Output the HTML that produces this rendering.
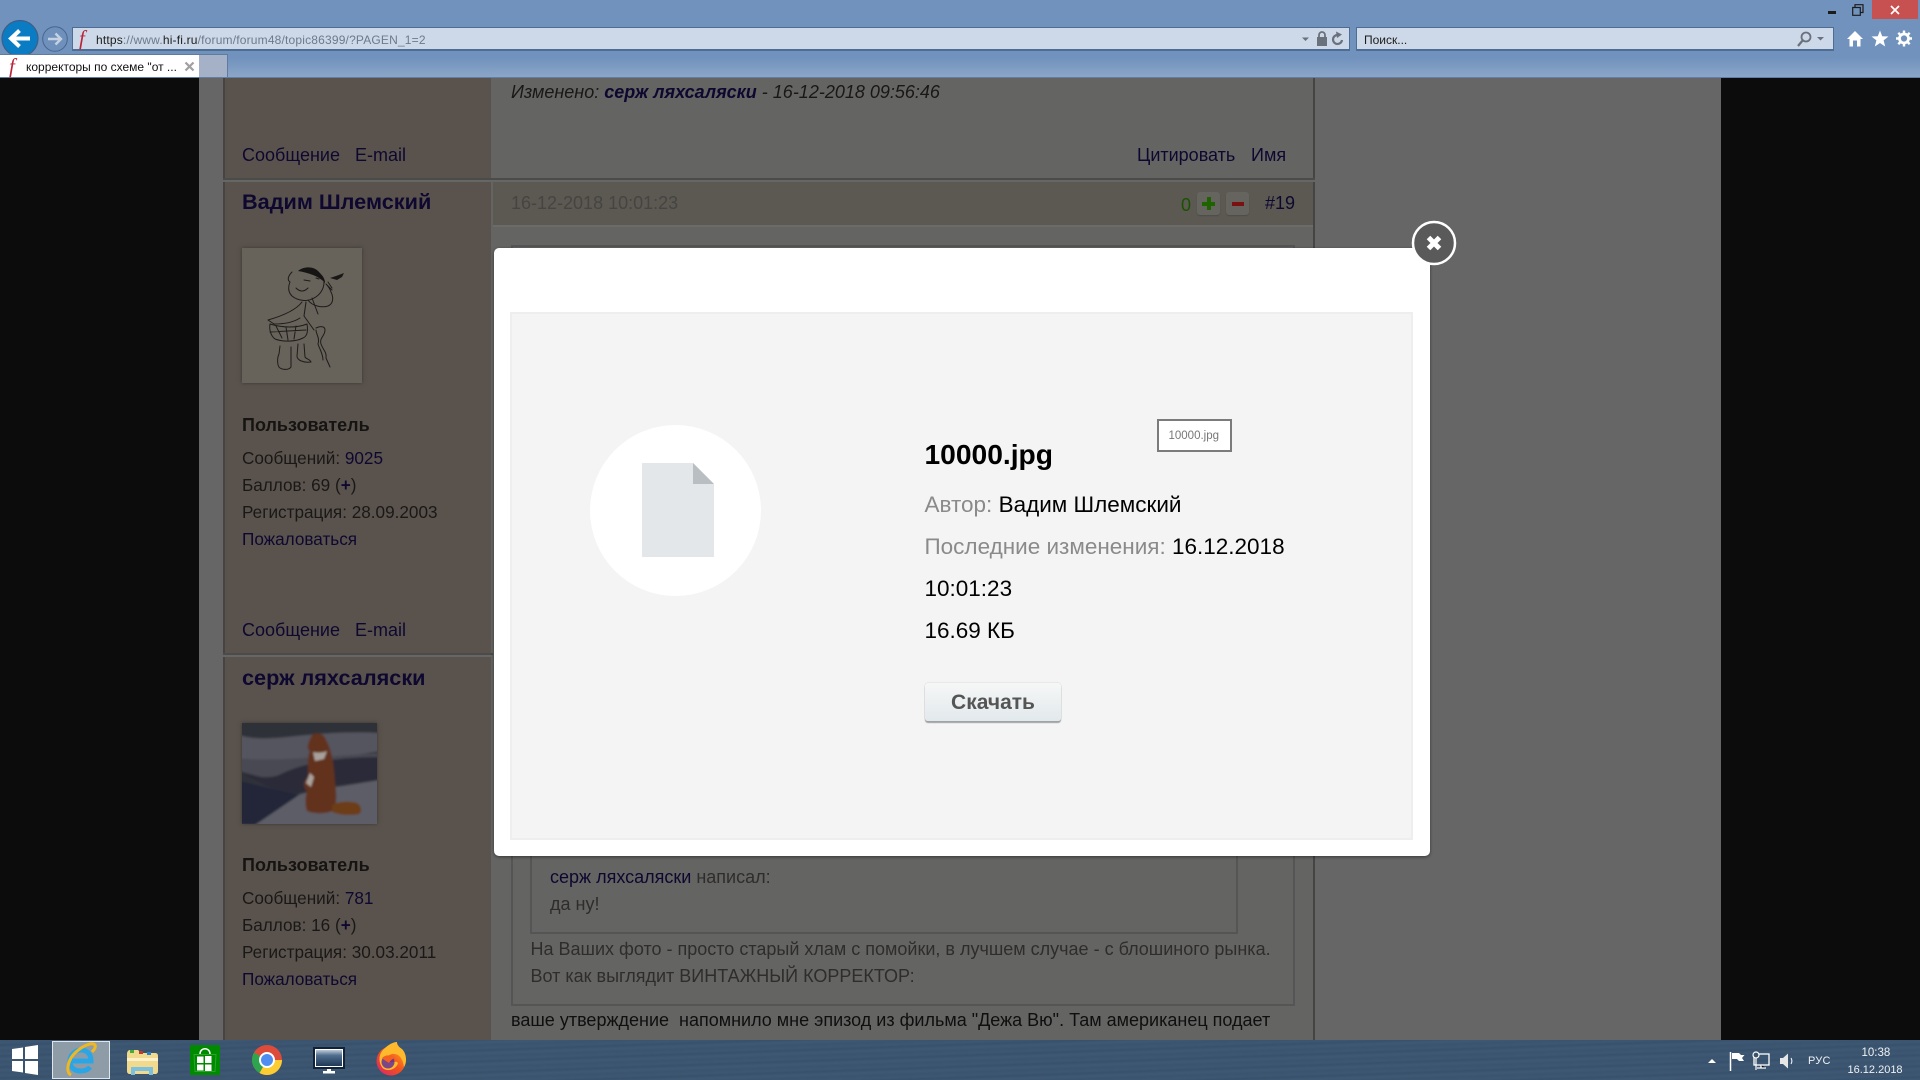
<!DOCTYPE html>
<html lang="ru"><head><meta charset="utf-8"><title>корректоры по схеме</title>
<style>
html,body{margin:0;padding:0;width:1920px;height:1080px;overflow:hidden;background:#0c0c0c}
body{position:relative;font-family:"Liberation Sans","DejaVu Sans",sans-serif}
.a{position:absolute;display:block}
.t{position:absolute;white-space:nowrap;line-height:1;}
.f{font-size:18px;color:#1a1816}
.s{font-size:17.15px;color:#1a1816}
.l{color:#0e0830}
.n{font-size:18px;color:#0e0830}
</style></head><body>
<!-- page background -->
<div class="a" style="left:199px;top:77px;width:1522px;height:963px;background:#666"></div>
<div class="a" style="left:223px;top:77px;width:2px;height:963px;background:#464442"></div>
<div class="a" style="left:225px;top:77px;width:266px;height:963px;background:#5a534d"></div>
<div class="a" style="left:491px;top:77px;width:822px;height:963px;background:#646462"></div>
<div class="a" style="left:1313px;top:77px;width:2px;height:963px;background:#454545"></div>
<div class="a" style="left:223px;top:178px;width:1092px;height:2px;background:#4b4b49"></div>
<div class="a" style="left:223px;top:180px;width:1092px;height:2px;background:#666"></div>
<div class="a" style="left:223px;top:653px;width:270px;height:2px;background:#4b4b49"></div>
<div class="a" style="left:223px;top:655px;width:270px;height:2px;background:#666"></div>
<div class="a" style="left:493px;top:182px;width:820px;height:43px;background:#5c5953"></div>
<div class="a" style="left:493px;top:225px;width:820px;height:2px;background:#6b6b69"></div>
<div class="a" style="left:511px;top:245px;width:784px;height:761px;box-sizing:border-box;border:2px solid #555"></div>
<div class="a" style="left:530px;top:700px;width:708px;height:234px;box-sizing:border-box;border:2px solid #555"></div>

<!-- forum text -->
<div class="t f" style="left:511px;top:83px;font-style:italic;">Изменено: <b class="l">серж ляхсаляски</b> - 16-12-2018 09:56:46</div>
<div class="t n" style="left:242px;top:146px">Сообщение</div>
<div class="t n" style="left:355px;top:146px">E-mail</div>
<div class="t n" style="left:1137px;top:146px">Цитировать</div>
<div class="t n" style="left:1251px;top:146px">Имя</div>

<div class="t l" style="left:242px;top:191px;font-size:21.7px;font-weight:bold">Вадим Шлемский</div>
<div class="t" style="left:511px;top:194px;font-size:18px;color:#464442">16-12-2018 10:01:23</div>
<div class="t" style="left:1181px;top:196px;font-size:18px;color:#1a5200">0</div>
<div class="a" style="left:1197px;top:192px;width:23px;height:23px;background:#65645f;border-radius:3px;box-shadow:0 1px 1px #4c4c48"></div>
<div class="a" style="left:1202px;top:201.5px;width:13px;height:4px;background:#1f6200"></div>
<div class="a" style="left:1206.5px;top:197px;width:4px;height:13px;background:#1f6200"></div>
<div class="a" style="left:1226px;top:192px;width:23px;height:23px;background:#65645f;border-radius:3px;box-shadow:0 1px 1px #4c4c48"></div>
<div class="a" style="left:1232px;top:201.5px;width:12px;height:4px;background:#7a1010"></div>
<div class="t n" style="left:1265px;top:194px">#19</div>

<!-- avatar 1 -->
<svg class="a" style="left:242px;top:248px;box-shadow:0 0 4px #3a3632" width="120" height="135" viewBox="0 0 120 135">
<rect width="120" height="135" fill="#67625a"/>
<g fill="none" stroke="#1e1c1a" stroke-width="1" stroke-linecap="round" stroke-linejoin="round">
<path d="M50 24c-4 4-5 8-2 10-2 5-2 10 2 14 6 5 16 6 22 2 6-3 10-9 10-16"/>
<path d="M54 40c4 4 8 4 12 0M62 32l6 1M74 30l3 1"/>
<path d="M66 52c4 6 14 8 20 6 5-2 6-8 3-14-1-3-3-6-5-8M84 36l6 6M86 34l4 6"/>
<path d="M60 54c-6 8-20 14-34 18l6 4c10 0 20-2 26-6M64 54l-2 14 10 14M70 50l6 16"/>
<path d="M28 76c-1 6 1 12 5 15 8 3 20 3 28-1 5-2 5-8 4-14-10 4-24 4-37 0zM34 78l6 12M44 79l2 13M54 78l-2 13M28 84l36-2"/>
<path d="M38 98l-1 8c-2 4-2 12 1 14 3 2 9 2 11-1l0-20M56 96l-1 12c0 4 6 7 14 6-1-3-5-3-6-5l-1-13"/>
<path d="M74 80c4-2 9-2 9 2 0 6-6 8-4 14 2 6 6 8 5 14l4 9M74 82c0 4 4 8 2 14 2 6 5 10 5 16"/>
</g>
<path d="M56 23c6-5 16-5 21 1 4 4 6 7 6 11-6-7-16-10-27-12z" fill="#161514"/>
<path d="M88 30l6-2 8-3-2 4-5 3z" fill="#1a1816"/>
</svg>

<div class="t" style="left:242px;top:416px;font-size:18px;font-weight:bold;color:#151412">Пользователь</div>
<div class="t s" style="left:242px;top:450px">Сообщений: <span class="l">9025</span></div>
<div class="t s" style="left:242px;top:477px">Баллов: 69 (<b class="l">+</b>)</div>
<div class="t s" style="left:242px;top:504px">Регистрация: 28.09.2003</div>
<div class="t s" style="left:242px;top:531px;color:#0e0830">Пожаловаться</div>
<div class="t n" style="left:242px;top:621px">Сообщение</div>
<div class="t n" style="left:355px;top:621px">E-mail</div>

<div class="t l" style="left:242px;top:667px;font-size:21.7px;font-weight:bold">серж ляхсаляски</div>
<!-- avatar 2 -->
<svg class="a" style="left:242px;top:723px;box-shadow:0 0 4px #3a3632" width="135" height="101" viewBox="0 0 135 101">
<defs><filter id="bl" x="-5%" y="-5%" width="110%" height="110%"><feGaussianBlur stdDeviation="1"/></filter></defs>
<g filter="url(#bl)">
<rect x="-3" y="-3" width="141" height="107" fill="#2f3038"/>
<path d="M-3 12c30 10 70-6 141-2v18c-40 8-90 10-141 8z" fill="#55555e"/>
<path d="M-3 36c40 2 80-2 141-6v12c-50 4-60 10-90 16-20 0-35-6-51-10z" fill="#484852"/>
<path d="M-3 50c20 4 30 6 40 2 20-10 50-18 101-18v22l-60 8-30 8c-20-6-30-14-51-22z" fill="#2a2b38"/>
<path d="M-3 105c24-22 54-36 104-42l37-6v48z" fill="#5d5d67"/>
<path d="M-3 58c26 6 46 12 60 14l-44 30H-3z" fill="#222638"/>
<path d="M70 12c4-3 12-2 14 5 6 10 8 26 9 42 2 14 2 24-3 29-6 3-18 3-25 0-2-6-2-12 0-20-4-4-5-9 1-14 0-10-1-20 2-26-4-2-2-8 2-16z" fill="#62321a"/>
<path d="M71 29c4 1 10 1 14-1l-3 8-9 2z" fill="#a8a19b"/>
<path d="M68 50l4 4-3 10-5-4z" fill="#aba39c"/>
<path d="M90 82c8-4 18-4 25-2 4 2 6 9 2 11-8 2-20 1-27-2z" fill="#6c3c18"/>
</g></svg>
<div class="t" style="left:242px;top:856px;font-size:18px;font-weight:bold;color:#151412">Пользователь</div>
<div class="t s" style="left:242px;top:890px">Сообщений: <span class="l">781</span></div>
<div class="t s" style="left:242px;top:917px">Баллов: 16 (<b class="l">+</b>)</div>
<div class="t s" style="left:242px;top:944px">Регистрация: 30.03.2011</div>
<div class="t s" style="left:242px;top:971px;color:#0e0830">Пожаловаться</div>

<div class="t" style="left:550px;top:868px;font-size:18px;color:#2f2d2c"><span class="l">серж ляхсаляски</span> написал:</div>
<div class="t" style="left:550px;top:895px;font-size:18px;color:#2f2d2c">да ну!</div>
<div class="t" style="left:530.5px;top:940px;font-size:18px;color:#2f2d2c">На Ваших фото - просто старый хлам с помойки, в лучшем случае - с блошиного рынка.</div>
<div class="t" style="left:530.5px;top:967px;font-size:18px;color:#2f2d2c">Вот как выглядит ВИНТАЖНЫЙ КОРРЕКТОР:</div>
<div class="t" style="left:511px;top:1011px;font-size:18px;color:#0f0f0f">ваше утверждение&nbsp; напомнило мне эпизод из фильма "Дежа Вю". Там американец подает</div>

<!-- modal -->
<div class="a" style="left:494px;top:248px;width:936px;height:608px;background:#fff;border-radius:5px;box-shadow:0 1px 3px rgba(0,0,0,.45)"></div>
<div class="a" style="left:510px;top:312px;width:903px;height:528px;box-sizing:border-box;background:#f4f4f4;border:2px solid #eeeeee"></div>
<div class="a" style="left:590px;top:425px;width:171px;height:171px;border-radius:50%;background:#fff"></div>
<svg class="a" style="left:642px;top:463px" width="72" height="94" viewBox="0 0 72 94">
<path d="M0 0H51L72 21V94H0z" fill="#e4e7ea"/><path d="M51 0L72 21H51z" fill="#b9bec3"/></svg>
<div class="t" style="left:924.5px;top:440px;font-size:28.2px;font-weight:bold;color:#000">10000.jpg</div>
<div class="a" style="left:1157px;top:419px;width:75px;height:33px;box-sizing:border-box;background:#fff;border:2px solid #7b7b7b"></div>
<div class="t" style="left:1168.5px;top:431px;font-size:11.5px;color:#777">10000.jpg</div>
<div class="t" style="left:924.5px;top:494px;font-size:22.5px;color:#8a8a8a">Автор: <span style="color:#000">Вадим Шлемский</span></div>
<div class="t" style="left:924.5px;top:536px;font-size:22.5px;color:#8a8a8a">Последние изменения: <span style="color:#000">16.12.2018</span></div>
<div class="t" style="left:924.5px;top:578px;font-size:22.5px;color:#000">10:01:23</div>
<div class="t" style="left:924.5px;top:620px;font-size:22.5px;color:#000">16.69 КБ</div>
<div class="a" style="left:925px;top:683px;width:136px;height:38px;border-radius:3px;background:linear-gradient(#f6f7f7,#e2e9ec);border:0;box-shadow:0 0 1px #aaa,0 2px 1px #9ea1a3"></div>
<div class="t" style="left:925px;top:692px;width:136px;text-align:center;font-size:21px;font-weight:bold;color:#555">Скачать</div>
<!-- close -->
<svg class="a" style="left:1410px;top:219px" width="48" height="48" viewBox="0 0 48 48">
<circle cx="24" cy="24" r="21" fill="#5a5a5a" stroke="#fff" stroke-width="2.500"/>
<path d="M18.500 18.500L29.500 29.500M29.500 18.500L18.500 29.500" stroke="#fff" stroke-width="5" fill="none"/></svg>

<!-- browser chrome -->
<div class="a" style="left:0;top:0;width:1920px;height:78px;background:linear-gradient(#7192bd 0,#7192bd 58px,#8ba5c7 77px);border-bottom:0"></div>
<div class="a" style="left:0;top:77px;width:1920px;height:1px;background:#627ea2"></div>
<!-- back/forward -->
<svg class="a" style="left:0;top:19px" width="72" height="38" viewBox="0 0 72 38">
<circle cx="20" cy="19.500" r="18" fill="#0a7cc3" stroke="#3f5e85" stroke-width="1.200"/>
<path d="M11 19.500H30M19.500 11.500L11 19.500L19.500 27.500" fill="none" stroke="#fff" stroke-width="4"/>
<circle cx="55" cy="20" r="12.300" fill="#6f90ba" stroke="#44668f" stroke-width="1"/>
<path d="M48 20H61M55.500 14.500L61 20L55.500 25.500" fill="none" stroke="#c4d1e2" stroke-width="2.400"/></svg>
<!-- address -->
<div class="a" style="left:72px;top:27px;width:1278px;height:24px;box-sizing:border-box;background:#cdd9e8;border:1px solid #4d6d92;border-bottom-width:2px"></div>
<div class="t" style="left:79px;top:28px;font-family:'Liberation Serif',serif;font-style:italic;font-size:21px;color:#b92438">f</div>
<div class="t" style="left:96px;top:34px;font-size:12px;letter-spacing:.18px;color:#6c7a8c"><span style="color:#1c1c1c">https</span>://www.<span style="color:#1c1c1c">hi-fi.ru</span>/forum/forum48/topic86399/?PAGEN_1=2</div>
<svg class="a" style="left:1296px;top:29px" width="50" height="20" viewBox="0 0 50 20">
<path d="M6 8.500H13L9.500 12z" fill="#69717c"/>
<path d="M21 8H31V17H21z" fill="#69717c"/><path d="M23 8V6a3 3 0 0 1 6 0V8" fill="none" stroke="#69717c" stroke-width="1.800"/>
<path d="M42 6a4.500 4.500 0 1 0 4 5" fill="none" stroke="#69717c" stroke-width="2.200"/><path d="M40 2.500L46 5.500L41 9z" fill="#69717c"/></svg>
<!-- search -->
<div class="a" style="left:1356px;top:27px;width:478px;height:24px;box-sizing:border-box;background:#cdd9e8;border:1px solid #4d6d92;border-bottom-width:2px"></div>
<div class="t" style="left:1364px;top:34px;font-size:12px;color:#1c1c1c">Поиск...</div>
<svg class="a" style="left:1795px;top:30px" width="36" height="18" viewBox="0 0 36 18">
<circle cx="11" cy="7" r="4.500" fill="none" stroke="#69717c" stroke-width="1.800"/><path d="M8 10L3 16" stroke="#69717c" stroke-width="2.200"/>
<path d="M22 7H29L25.500 10.500z" fill="#69717c"/></svg>
<!-- home star gear -->
<svg class="a" style="left:1845px;top:28px" width="70" height="24" viewBox="0 0 70 24">
<path d="M10 3L2 11H4.500V18.500H8V12.500H12V18.500H15.500V11H18z" fill="#fff"/>
<path d="M35 2.500L37.200 8.200L43.500 8.500L38.600 12.400L40.200 18.500L35 15L29.800 18.500L31.400 12.400L26.500 8.500L32.800 8.200z" fill="#fff"/>
<circle cx="59" cy="10.500" r="4.500" fill="none" stroke="#fff" stroke-width="2.800"/>
<path d="M59 2.500V5M59 16V18.500M51 10.500H53.500M64.500 10.500H67M53.300 4.800L55.100 6.600M62.900 14.400L64.700 16.200M64.700 4.800L62.900 6.600M55.100 14.400L53.300 16.200" stroke="#fff" stroke-width="2.400"/></svg>
<!-- window buttons -->
<div class="a" style="left:1828px;top:11px;width:8px;height:3px;background:#1c1c1c"></div>
<svg class="a" style="left:1852px;top:4px" width="12" height="12" viewBox="0 0 12 12"><path d="M.7 3.500H8.300V11.300H.7zM3 3.500V.7H11V8.500H8.300" fill="none" stroke="#1c1c1c" stroke-width="1.200"/></svg>
<div class="a" style="left:1872px;top:0;width:46px;height:19px;background:#c75050"></div>
<svg class="a" style="left:1890px;top:5px" width="10" height="10" viewBox="0 0 10 10"><path d="M1 1L9 9M9 1L1 9" stroke="#fff" stroke-width="1.700"/></svg>
<!-- tabs -->
<div class="a" style="left:199px;top:54px;width:29px;height:23px;box-sizing:border-box;background:#a4b1c6;border:1px solid #5f7ca0;border-bottom:0;border-left:0"></div>
<div class="a" style="left:0;top:54px;width:199px;height:23px;background:#fff;border-top:1px solid #5f7ca0;box-sizing:border-box"></div>
<div class="t" style="left:9px;top:56px;font-family:'Liberation Serif',serif;font-style:italic;font-size:21px;color:#b92438">f</div>
<div class="t" style="left:26px;top:61px;font-size:12px;color:#111">корректоры по схеме "от ...</div>
<svg class="a" style="left:184px;top:61px" width="11" height="11" viewBox="0 0 11 11"><path d="M1.500 1.500L9.500 9.500M9.500 1.500L1.500 9.500" stroke="#a0a0a0" stroke-width="2.200"/></svg>

<!-- taskbar -->
<div class="a" style="left:0;top:1040px;width:1920px;height:40px;background:repeating-linear-gradient(178deg,#3a536e 0,#3d5773 3px,#37506b 5px,#3f5873 8px,#3a536e 11px)"></div>
<svg class="a" style="left:0;top:1040px" width="420" height="40" viewBox="0 0 420 40">
<defs><linearGradient id="scr" x1="0" y1="0" x2="0" y2="1"><stop offset="0" stop-color="#c9d3de"/><stop offset=".35" stop-color="#4f6d8e"/><stop offset="1" stop-color="#1d3552"/></linearGradient>
<linearGradient id="fx" x1="0" y1="1" x2="1" y2="0"><stop offset="0" stop-color="#d9236f"/><stop offset=".5" stop-color="#f3501f"/><stop offset="1" stop-color="#ffb01f"/></linearGradient></defs>
<path d="M12 9L23 7.500V19H12zM25 7L38 5V19H25zM12 21H23V32.500L12 31zM25 21H38V35L25 33z" fill="#fff"/>
<rect x="52.500" y="1.500" width="57" height="37" fill="#8e9ca8" stroke="#dfe5ea" stroke-width="1"/>
<path d="M71 21H91C91 13 86 10 81 10C75 10 70 15 70 21C70 28 75 31 81 31C85 31 88 30 90 27" fill="none" stroke="#2aa6e6" stroke-width="5"/>
<path d="M71 35C65 32 68 19 76 12C84 5 92 2 95 5C96 7 94 10 92 12" fill="none" stroke="#f0b820" stroke-width="3"/>
<path d="M127 14c0-2 1-4 3-4h8l3 3h14c2 0 3 1 3 3v15c0 2-1 3-3 3h-25c-2 0-3-1-3-3z" fill="#f1d98e"/>
<path d="M127 18h31v3h-31z" fill="#fbf0c8"/>
<path d="M131 27h22v8h-4v-4h-14v4h-4z" fill="#7cc0e0"/>
<rect x="130" y="10" width="4" height="3" fill="#3fae3a"/><rect x="139" y="11" width="4" height="3" fill="#c0392b"/><rect x="147" y="12" width="4" height="3" fill="#2a7ed0"/>
<rect x="190" y="5" width="30" height="30" fill="#008a00"/>
<path d="M194 14.500h22l-1 17h-20z" fill="none" stroke="#2aa52a" stroke-width="1"/><path d="M200 14c0-7 10-7 10 0" fill="none" stroke="#fff" stroke-width="1.500"/>
<path d="M197 16.500h6.500v6.500h-6.500zM205 16h6.500v7h-6.500zM197 24.500h6.500v6h-6.500zM205 24.500h6.500v6.500h-6.500z" fill="#fff"/>
<circle cx="267" cy="20" r="15" fill="#dd4b3a"/>
<path d="M267 20L254 12.500A15 15 0 0 0 259.500 33z" fill="#2ea44f"/>
<path d="M267 20L259.500 33A15 15 0 0 0 282 20z" fill="#fccc33"/>
<circle cx="267" cy="20" r="7" fill="#4f8ef0" stroke="#fff" stroke-width="2"/>
<rect x="313" y="7" width="32" height="22" fill="#10223a"/>
<rect x="315.500" y="9.500" width="27" height="17" fill="url(#scr)" stroke="#fff" stroke-width="1"/>
<rect x="327" y="29" width="4" height="3" fill="#fff"/><rect x="323" y="31" width="12" height="2.500" fill="#fff"/>
<circle cx="391" cy="21" r="14.500" fill="url(#fx)"/>
<path d="M384 9c6-6 11-7 13-7 0 3 2 5 5 7 5 5 5 14 2 18-1-8-5-14-12-13-4 1-6 4-4 7 3 3 8-1 10 2-1 5-8 9-14 6-5-3-7-14 0-20z" fill="#ffb92c"/>
<circle cx="388" cy="22" r="6.500" fill="#5b2a9e" opacity=".8"/>
<path d="M382 18c4-4 10-3 13 0-3 1-5 3-6 5-3-2-5-3-7-5z" fill="#f3601f"/>
</svg>
<svg class="a" style="left:1705px;top:1040px" width="90" height="40" viewBox="0 0 90 40">
<path d="M3 23L7 19L11 23z" fill="#fff"/>
<path d="M25.500 12V31" stroke="#fff" stroke-width="1.500"/><path d="M27 13H34L36 15H39.500L37 18L39 21H34L32 19H27z" fill="#fff"/>
<rect x="49" y="14" width="15" height="11" fill="none" stroke="#fff" stroke-width="1.300"/><path d="M56 25V28H61M52 28H60" stroke="#fff" stroke-width="1.300"/>
<circle cx="51" cy="15" r="3" fill="#3a536e" stroke="#fff" stroke-width="1.200"/><path d="M51 18V30" stroke="#fff" stroke-width="1.200"/>
<path d="M75 18H78L83 13.500V28.500L78 24H75z" fill="#e6e6e6"/><path d="M86 18c1.200 2 1.200 4 0 6" fill="none" stroke="#fff" stroke-width="1"/>
</svg>
<div class="t" style="left:1808px;top:1055.500px;font-size:11px;color:#eef1f4;letter-spacing:.2px">РУС</div>
<div class="t" style="left:1861.500px;top:1048px;font-size:11.500px;color:#eef1f4">10:38</div>
<div class="t" style="left:1847.500px;top:1064.500px;font-size:11px;color:#eef1f4">16.12.2018</div>
</body></html>
